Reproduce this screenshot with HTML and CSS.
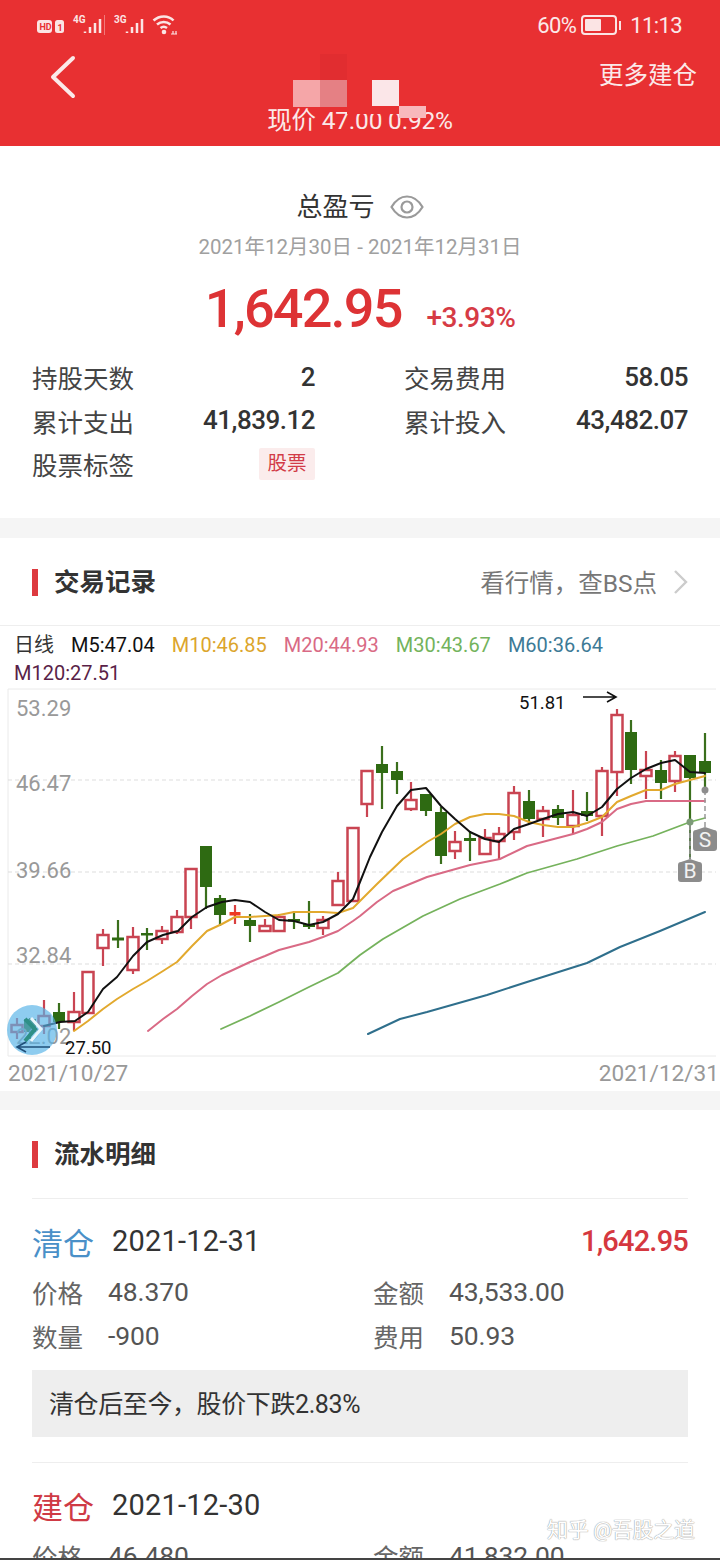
FILE: index.html
```html
<!DOCTYPE html>
<html lang="zh-CN">
<head>
<meta charset="utf-8">
<title>总盈亏</title>
<link rel="stylesheet" href="styles.css">
</head>
<body>
<div class="page">
  <header class="head">
    <div class="status">
      <svg class="status-left" width="150" height="26" viewBox="36 12 150 26">
        <rect x="37" y="20" width="15" height="13" rx="3" fill="#fbe4e4"/>
        <rect x="55" y="20" width="9" height="13" rx="2.5" fill="#fbe4e4"/>
        <text class="mini dark" x="39.5" y="30">HD</text>
        <text class="mini dark" x="57.5" y="30.5">1</text>
        <text class="mini" x="73" y="23">4G</text>
        <path class="bars" d="M85 33v-1.500M90 33v-6M95 33v-10M100 33v-14"/>
        <path class="sep" d="M104.500 15v20"/>
        <text class="mini" x="114" y="23">3G</text>
        <path class="bars" d="M127 33v-1.500M132 33v-6M137 33v-10M142 33v-14"/>
        <path class="wifi" d="M153.500 20.500c6-5.500 15-5.500 20 0M157 24.500c4-3.500 9.500-3.500 13.500 0M160.500 28c2-1.500 4.500-1.500 6.500 0"/>
        <circle cx="164" cy="32" r="2.300" fill="#fbe4e4"/>
        <path class="sep-w" d="M171 34h6M173 31v3M176 31v3"/>
      </svg>
      <div class="status-right">
        <span class="pct">60%</span>
        <span class="batt"><span class="batt-fill"></span></span>
        <span class="batt-nub"></span>
        <span class="clock">11:13</span>
      </div>
    </div>
    <div class="nav">
      <svg class="back" width="26" height="44" viewBox="0 0 26 44"><path d="M23 3L3 22l20 19"/></svg>
      <span class="more">更多建仓</span>
    </div>
    <div class="sub">现价 47.00 0.92%</div>
    <span class="mos m1"></span><span class="mos m2"></span><span class="mos m3"></span><span class="mos m4"></span><span class="mos m5"></span><span class="mos m6"></span>
  </header>

  <section class="summary">
    <div class="sum-title">
      <span>总盈亏</span>
      <svg class="eye" width="34" height="24" viewBox="0 0 34 24"><path d="M1.500 12C6 4.500 11 1.500 17 1.500S28 4.500 32.500 12C28 19.500 23 22.500 17 22.500S6 19.500 1.500 12z"/><circle cx="17" cy="12" r="5.500"/></svg>
    </div>
    <div class="sum-date">2021年12月30日 - 2021年12月31日</div>
    <div class="sum-num"><span class="big">1,642.95</span><span class="rate">+3.93%</span></div>
    <div class="stats">
      <div class="stat"><span>持股天数</span><b>2</b></div>
      <div class="stat"><span>交易费用</span><b>58.05</b></div>
      <div class="stat"><span>累计支出</span><b>41,839.12</b></div>
      <div class="stat"><span>累计投入</span><b>43,482.07</b></div>
      <div class="stat"><span>股票标签</span><em class="tag">股票</em></div>
    </div>
  </section>

  <section class="records">
    <div class="sec-head line">
      <h2 class="sec-title">交易记录</h2>
      <div class="sec-link">
        <span>看行情，查BS点</span>
        <svg width="15" height="26" viewBox="0 0 15 26"><path d="M2 2l11 11L2 24"/></svg>
      </div>
    </div>
    <div class="mas">
      <span class="ma-name">日线</span>
      <span class="c5">M5:47.04</span>
      <span class="c10">M10:46.85</span>
      <span class="c20">M20:44.93</span>
      <span class="c30">M30:43.67</span>
      <span class="c60">M60:36.64</span>
      <span class="c120">M120:27.51</span>
    </div>
    <svg class="chart" width="720" height="372" viewBox="0 688 720 372">
      <path class="frame" d="M8 690H716M8 690V1057M8 1057H716"/>
      <path class="grid" d="M8 781H716M8 873H716M8 965H716"/>

      <path class="w-r" d="M17 1019V1040M44 1001V1035M74 993V1032M103 930V967M133 928V975M162 927V945M177 911V935M191 870V930M265 920V933M279 915V933M323 917V936M338 873V906M367 772V818M411 783V812M455 832V860M485 830V855M499 828V860M514 787V841M543 807V838M573 791V835M602 768V837M617 710V797M646 752V800M675 752V793"/>
      <path class="w-g" d="M30 1019V1040M59 1004V1030M118 921V949M147 929V951M206 847V910M220 896V927M250 915V943M294 912V930M309 902V930M382 747V810M397 763V795M426 795V817M441 808V865M470 832V862M529 791V825M558 806V826M587 793V822M631 721V785M661 761V800M690 756V823M705 734V790"/>
      <path class="w-o" d="M235 906V925"/>

      <g class="c-r">
        <rect x="11.500" y="1026" width="11" height="7"/>
        <rect x="38.500" y="1017" width="11" height="10"/>
        <rect x="68.500" y="1013" width="11" height="10"/>
        <rect x="82.500" y="973" width="11" height="41"/>
        <rect x="97.500" y="936" width="11" height="13"/>
        <rect x="127.500" y="938" width="11" height="33"/>
        <rect x="156.500" y="932" width="11" height="8"/>
        <rect x="171.500" y="918" width="11" height="15"/>
        <rect x="185.500" y="870" width="11" height="48"/>
        <rect x="259.500" y="927" width="11" height="5"/>
        <rect x="273.500" y="918" width="11" height="14"/>
        <rect x="317.500" y="921" width="11" height="8"/>
        <rect x="332.500" y="882" width="11" height="24"/>
        <rect x="347.500" y="829" width="11" height="73"/>
        <rect x="361.500" y="772" width="11" height="33"/>
        <rect x="405.500" y="801" width="11" height="9"/>
        <rect x="449.500" y="843" width="11" height="9"/>
        <rect x="479.500" y="839" width="11" height="16"/>
        <rect x="493.500" y="835" width="11" height="7"/>
        <rect x="508.500" y="794" width="11" height="39"/>
        <rect x="537.500" y="812" width="11" height="8"/>
        <rect x="567.500" y="816" width="11" height="11"/>
        <rect x="596.500" y="772" width="11" height="45"/>
        <rect x="611.500" y="716" width="11" height="57"/>
        <rect x="640.500" y="771" width="11" height="6"/>
        <rect x="669.500" y="757" width="11" height="25"/>
      </g>
      <g class="c-g">
        <rect x="24" y="1020" width="12" height="13"/>
        <rect x="53" y="1013" width="12" height="10"/>
        <rect x="112" y="938.500" width="12" height="3"/>
        <rect x="141" y="934" width="12" height="2.500"/>
        <rect x="200" y="847" width="12" height="41"/>
        <rect x="214" y="899" width="12" height="17"/>
        <rect x="244" y="921" width="12" height="6"/>
        <rect x="288" y="920" width="12" height="2.500"/>
        <rect x="303" y="925" width="12" height="3"/>
        <rect x="376" y="765" width="12" height="9"/>
        <rect x="391" y="772" width="12" height="9"/>
        <rect x="420" y="795" width="12" height="17"/>
        <rect x="435" y="813" width="12" height="44"/>
        <rect x="464" y="839" width="12" height="3"/>
        <rect x="523" y="802" width="12" height="18"/>
        <rect x="552" y="810" width="12" height="9"/>
        <rect x="581" y="812" width="12" height="5"/>
        <rect x="625" y="733" width="12" height="38"/>
        <rect x="655" y="771" width="12" height="13"/>
        <rect x="684" y="756" width="12" height="23"/>
        <rect x="699" y="762" width="12" height="12"/>
      </g>
      <rect class="c-o" x="229.500" y="913" width="11" height="3.500"/>

      <polyline class="l60" points="368,1035 400,1020 427,1013 487,996 527,983 587,964 620,948 660,932 705,913"/>
      <polyline class="l30" points="221,1030 250,1017 279,1003 309,988 338,974 360,956 383,940 423,917 460,900 500,885 527,874 577,860 617,847 653,837 690,823 705,819"/>
      <polyline class="l20" points="148,1032 163,1020 177,1010 192,997 207,985 222,976 235,970 250,963 265,957 279,951 294,947 309,943 323,938 338,932 353,922 360,917 377,903 393,892 427,878 470,866 500,860 527,847 573,835 587,830 602,823 617,810 631,805 646,802 705,802"/>
      <polyline class="l10" points="74,1032 88,1022 103,1010 117,1000 133,990 147,982 163,972 177,963 192,947 207,932 222,925 235,918 250,918 265,917 279,916 294,913 309,913 323,913 338,914 353,909 360,902 377,885 403,860 427,843 441,835 455,825 470,818 485,815 499,815 514,817 529,823 543,826 558,828 573,828 587,824 602,818 617,803 631,797 646,791 661,791 675,785 690,781 705,777"/>
      <polyline class="l5" points="44,1027 60,1023 75,1022 88,1013 103,990 117,978 133,957 147,943 163,936 178,932 192,918 207,908 222,903 235,901 250,903 265,913 279,921 294,922 309,926 323,923 338,915 353,900 360,883 370,858 382,833 397,807 411,791 426,789 441,807 455,820 470,833 485,840 499,843 514,830 529,825 543,820 558,815 573,813 587,817 602,808 617,790 631,779 646,770 661,764 675,761 690,773 705,774"/>

      <text class="ax" x="16" y="717">53.29</text>
      <text class="ax" x="16" y="792">46.47</text>
      <text class="ax" x="16" y="879">39.66</text>
      <text class="ax" x="16" y="964">32.84</text>
      <text class="ax" x="16" y="1045">22.02</text>

      <circle class="bubble" cx="32" cy="1031" r="25"/>
      <path class="ch1" d="M25 1020l10 10-10 12"/>
      <path class="ch2" d="M31 1019l10 11-10 12"/>

      <text class="mark" x="519" y="710">51.81</text>
      <path class="arrow" d="M583 698H616M607 693l9 5-9 5"/>
      <text class="mark" x="65" y="1055">27.50</text>
      <path class="arrow blue" d="M50 1048H18M26 1043l-9 5 9 5"/>

      <path class="wick-bs" d="M690 823V860"/>
      <path class="dash-bs" d="M690 826V860M705 791V828"/>
      <circle class="dot" cx="705" cy="791" r="3.500"/>
      <circle class="dot g" cx="690" cy="823" r="3.500"/>
      <path class="bs" d="M696 831l9-3 9 3q3 0 3 3v15q0 3-3 3h-18q-3 0-3-3v-15q0-3 3-3z"/>
      <path class="bs" d="M681 863l9-3 9 3q3 0 3 3v14q0 3-3 3h-18q-3 0-3-3v-14q0-3 3-3z"/>
      <text class="bs-t" x="705" y="848">S</text>
      <text class="bs-t" x="690" y="879">B</text>
    </svg>
    <div class="dates"><span>2021/10/27</span><span>2021/12/31</span></div>
  </section>

  <section class="flow">
    <div class="sec-head">
      <h2 class="sec-title">流水明细</h2>
    </div>
    <article class="entry first">
      <div class="e-head">
        <span class="kind blue-t">清仓</span>
        <span class="e-date">2021-12-31</span>
        <span class="e-val">1,642.95</span>
      </div>
      <div class="e-grid">
        <div class="kv"><span>价格</span><b>48.370</b></div>
        <div class="kv"><span>金额</span><b>43,533.00</b></div>
        <div class="kv"><span>数量</span><b>-900</b></div>
        <div class="kv"><span>费用</span><b>50.93</b></div>
      </div>
      <div class="note">清仓后至今，股价下跌2.83%</div>
    </article>
    <article class="entry">
      <div class="e-head">
        <span class="kind red-t">建仓</span>
        <span class="e-date">2021-12-30</span>
      </div>
      <div class="e-grid">
        <div class="kv"><span>价格</span><b>46.480</b></div>
        <div class="kv"><span>金额</span><b>41,832.00</b></div>
      </div>
    </article>
  </section>
  <div class="wm">知乎 @吾股之道</div>
  <div class="edge"></div>
</div>
</body>
</html>
```
FILE: styles.css
```css
* { box-sizing: border-box; }
html, body { margin: 0; padding: 0; }
body { background: #fff; font-family: "Roboto", "Noto Sans CJK SC", sans-serif; color: #333; }
.page { position: relative; width: 720px; height: 1560px; overflow: hidden; background: #fff; }

.head { position: relative; height: 146px; background: #e83032; color: #fbe9e9; }
.status { display: flex; justify-content: space-between; align-items: center; height: 50px; padding: 0 38px 0 36px; }
.status-left { display: block; margin-top: 0; }
.mini { font: 700 10px "Roboto", sans-serif; fill: #fbe4e4; }
.mini.dark { fill: #e83032; font-size: 9px; }
.bars { stroke: #fbe4e4; stroke-width: 2.500; fill: none; }
.sep { stroke: #f07a7a; stroke-width: 1; }
.wifi { stroke: #fbe4e4; stroke-width: 2.500; fill: none; }
.sep-w { stroke: #fbe4e4; stroke-width: 1.200; fill: none; }
.status-right { display: flex; align-items: center; font-size: 22px; }
.pct { margin-right: 5px; letter-spacing: -.6px; }
.batt { display: block; width: 36px; height: 20px; border: 2px solid #fbe4e4; border-radius: 4px; padding: 2px; }
.batt-fill { display: block; width: 16px; height: 100%; background: #fbe4e4; border-radius: 1px; }
.batt-nub { display: block; width: 2px; height: 9px; margin: 0 9px 0 2px; background: #fbe4e4; }
.clock { letter-spacing: -.6px; }
.nav { display: flex; justify-content: space-between; align-items: center; height: 46px; padding: 3px 23px 0 50px; }
.back { display: block; margin-top: 5px; }
.back path { fill: none; stroke: #fbe9e9; stroke-width: 4; stroke-linecap: round; stroke-linejoin: round; }
.more { font-size: 24.500px; line-height: 30px; margin-top: 3px; }
.sub { text-align: center; font-size: 24.500px; line-height: 30px; margin-top: 10px; letter-spacing: -.2px; }
.mos { position: absolute; display: block; }
.m1 { left: 293px; top: 80px; width: 27px; height: 27px; background: #f5a6a8; }
.m2 { left: 320px; top: 80px; width: 27px; height: 27px; background: #e58084; }
.m3 { left: 372px; top: 80px; width: 27px; height: 27px; background: #fbe6e8; }
.m4 { left: 399px; top: 106px; width: 27px; height: 12px; background: #f8b8bc; }
.m5 { left: 320px; top: 54px; width: 27px; height: 26px; background: #e12d30; }
.m6 { left: 347px; top: 106px; width: 52px; height: 8px; background: #e83032; }

.summary { height: 372px; padding: 44px 32px 0; border-bottom: 0; }
.sum-title { display: flex; justify-content: center; align-items: center; gap: 15px; font-size: 26px; line-height: 34px; padding-left: 0; color: #333; }
.eye { display: block; }
.eye path, .eye circle { fill: none; stroke: #9a9a9a; stroke-width: 2.200; }
.sum-date { text-align: center; font-size: 20.500px; line-height: 28px; color: #a0a0a0; margin-top: 9px; }
.sum-num { display: flex; justify-content: center; align-items: baseline; gap: 25px; color: #dd3335; margin-top: 14px; height: 68px; line-height: 68px; padding-right: 0; }
.big { font-size: 54px; font-weight: 500; letter-spacing: -1.800px; }
.rate { font-size: 28px; font-weight: 500; color: #d63b45; letter-spacing: -.5px; }
.stats { display: grid; grid-template-columns: 283px 284px; column-gap: 89px; margin-top: 12px; }
.stat { display: flex; justify-content: space-between; align-items: center; height: 43.500px; font-size: 25.500px; color: #444; }
.stat b { font-weight: 500; font-size: 26px; letter-spacing: -.5px; color: #333; }
.tag { display: block; width: 56px; height: 32px; font-style: normal; font-size: 19.500px; line-height: 32px; text-align: center; color: #d23b47; background: #fbecec; border-radius: 2px; }

.records { margin-top: 20px; border-top: 0; }
.page { }
.records, .flow { position: relative; }
.sec-head { display: flex; justify-content: space-between; align-items: center; height: 88px; padding: 0 32px; }
.sec-head.line { border-bottom: 1px solid #eee; }
.sec-title { margin: 0; padding-left: 22px; position: relative; font-size: 25.500px; line-height: 32px; font-weight: 700; color: #333; }
.sec-title::before { content: ""; position: absolute; left: 0; top: 3px; width: 6px; height: 27px; background: #dd3a3f; }
.sec-link { display: flex; align-items: center; gap: 16px; font-size: 24.500px; color: #777; }
.sec-link svg { display: block; }
.sec-link path { fill: none; stroke: #ccc; stroke-width: 2.400; }
.mas { display: flex; flex-wrap: wrap; column-gap: 17px; padding: 6px 0 0 14px; font-size: 20px; line-height: 27px; height: 61px; width: 630px; }
.ma-name { color: #333; }
.c5 { color: #111; } .c10 { color: #dca52c; } .c20 { color: #d96a85; } .c30 { color: #73b35c; } .c60 { color: #3d7a96; } .c120 { color: #5a1f48; }
.chart { display: block; margin-top: 0; margin-bottom: -1px; }
.frame { fill: none; stroke: #eaeaea; stroke-width: 1; }
.grid { fill: none; stroke: #ddd; stroke-width: 1; stroke-dasharray: 4 3; }
.w-r, .w-g, .w-o { fill: none; stroke-width: 2.200; }
.w-r { stroke: #c94452; } .w-g { stroke: #3a6f1c; } .w-o { stroke: #d94040; }
.c-r rect { fill: #fff; stroke: #c94452; stroke-width: 2.500; }
.c-g rect { fill: #2e6a12; }
.c-o { fill: #ee3a22; }
polyline { fill: none; stroke-linejoin: round; stroke-linecap: round; }
.l5 { stroke: #111; stroke-width: 2; }
.l10 { stroke: #e2a92e; stroke-width: 2; }
.l20 { stroke: #d96a85; stroke-width: 2; }
.l30 { stroke: #75b25c; stroke-width: 1.800; }
.l60 { stroke: #2f6f8c; stroke-width: 2; }
.ax { font-family: "Roboto", sans-serif; font-size: 22px; fill: #999; }
.bubble { fill: #58b4e8; opacity: .68; }
.ch1 { fill: none; stroke: #2e8f86; stroke-width: 4; }
.ch2 { fill: none; stroke: #e8f6fc; stroke-width: 3; }
.mark { font-family: "Roboto", sans-serif; font-size: 18.500px; fill: #111; }
.arrow { fill: none; stroke: #111; stroke-width: 1.600; }
.arrow.blue { stroke: #1f4f7a; }
.wick-bs { stroke: #5e7d50; stroke-width: 2; }
.dash-bs { fill: none; stroke: #999; stroke-width: 1.500; stroke-dasharray: 5 3; }
.dot { fill: #8d8d8d; }
.dot.g { fill: #7d9a78; }
.bs { fill: #8c8c8c; }
.bs-t { font-family: "Roboto", sans-serif; font-size: 21px; fill: #f2f2f2; text-anchor: middle; }
.dates { display: flex; justify-content: space-between; padding: 0 1px 0 8px; height: 33px; line-height: 32px; font-size: 22.600px; color: #999; }

.flow { margin-top: 19px; background: #fff; }
.records::after { content: ""; position: absolute; left: 0; right: 0; bottom: -19px; height: 19px; background: #f5f5f5; }
.summary::after { content: ""; display: block; }
.entry { margin: 0 32px; border-top: 1px solid #eee; padding-top: 21px; }
.e-head { display: flex; align-items: center; height: 42px; }
.kind { font-size: 31px; width: 80px; }
.blue-t { color: #4a90c8; } .red-t { color: #cf3a45; }
.e-date { font-size: 29px; color: #333; letter-spacing: .2px; }
.e-val { margin-left: auto; font-size: 29px; font-weight: 500; color: #d5383f; letter-spacing: -.8px; }
.e-grid { display: grid; grid-template-columns: 341px 1fr; margin-top: 7px; }
.kv { display: flex; align-items: center; height: 44.500px; font-size: 25.500px; color: #666; }
.kv span { width: 76px; }
.kv b { font-weight: 400; font-size: 26.500px; color: #555; letter-spacing: -.1px; }
.note { height: 67px; margin-top: 12px; margin-bottom: 25px; padding-left: 17px; line-height: 70px; background: #eee; font-size: 25px; color: #333; letter-spacing: -.4px; }
.wm { position: absolute; left: 547px; top: 1516px; font-size: 21px; line-height: 28px; letter-spacing: -.3px; color: #fff; opacity: .85; text-shadow: 0 0 1px #888, 0 0 1px #888; }
.edge { position: absolute; left: 0; right: 0; bottom: 0; height: 2px; background: #444; }
.summary { background: #fff; }
.page { background: #fff; }
.records { background: #fff; }
.summary + .records { box-shadow: 0 -20px 0 #f5f5f5; }
```
